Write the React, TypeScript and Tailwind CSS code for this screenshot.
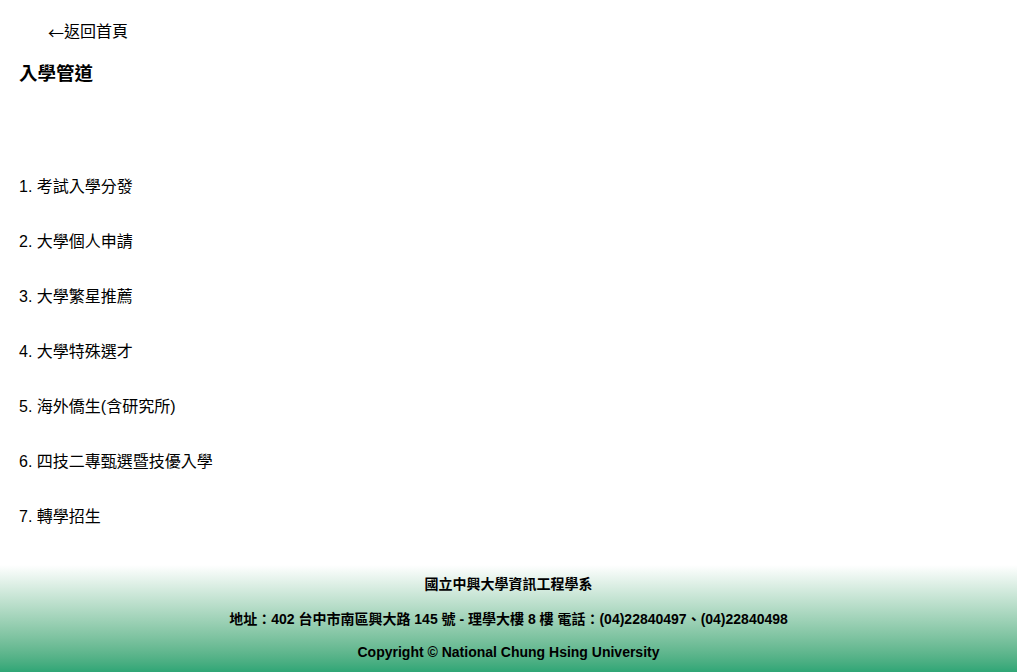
import React from 'react';

const channels = [
  '考試入學分發',
  '大學個人申請',
  '大學繁星推薦',
  '大學特殊選才',
  '海外僑生(含研究所)',
  '四技二專甄選暨技優入學',
  '轉學招生',
];

export default function App() {
  return (
    <div className="min-h-screen flex flex-col bg-white text-black font-['Liberation_Sans','Noto_Sans_CJK_TC',sans-serif]">
      <main className="flex-1">
        {/* Back link */}
        <div className="mt-[22px] pl-[48px] h-[20px] flex items-center text-[16px]">
          <a href="#" className="flex items-center text-black no-underline">
            <span className="font-['Noto_Sans_CJK_TC',sans-serif]">←</span>
            <span>返回首頁</span>
          </a>
        </div>

        <h2 className="mt-[20px] pl-[19px] text-[18.5px] leading-[24px] font-bold">入學管道</h2>

        <ul className="mt-[73px] pl-[19px]">
          {channels.map((name, i) => (
            <li key={name} className="h-[55px] flex items-center text-[16px] leading-[20px]">
              {i + 1}. {name}
            </li>
          ))}
        </ul>
      </main>

      {/* Footer */}
      <footer className="mt-[21px] h-[107px] bg-linear-to-b from-white to-[#2ea676] text-center text-[14px] font-bold leading-[17px] pt-[11px]">
        <p>國立中興大學資訊工程學系</p>
        <p className="mt-[18px]">
          地址：402 台中市南區興大路 145 號 - 理學大樓 8 樓 電話：(04)22840497、(04)22840498
        </p>
        <p className="mt-[16px]">Copyright © National Chung Hsing University</p>
      </footer>
    </div>
  );
}
